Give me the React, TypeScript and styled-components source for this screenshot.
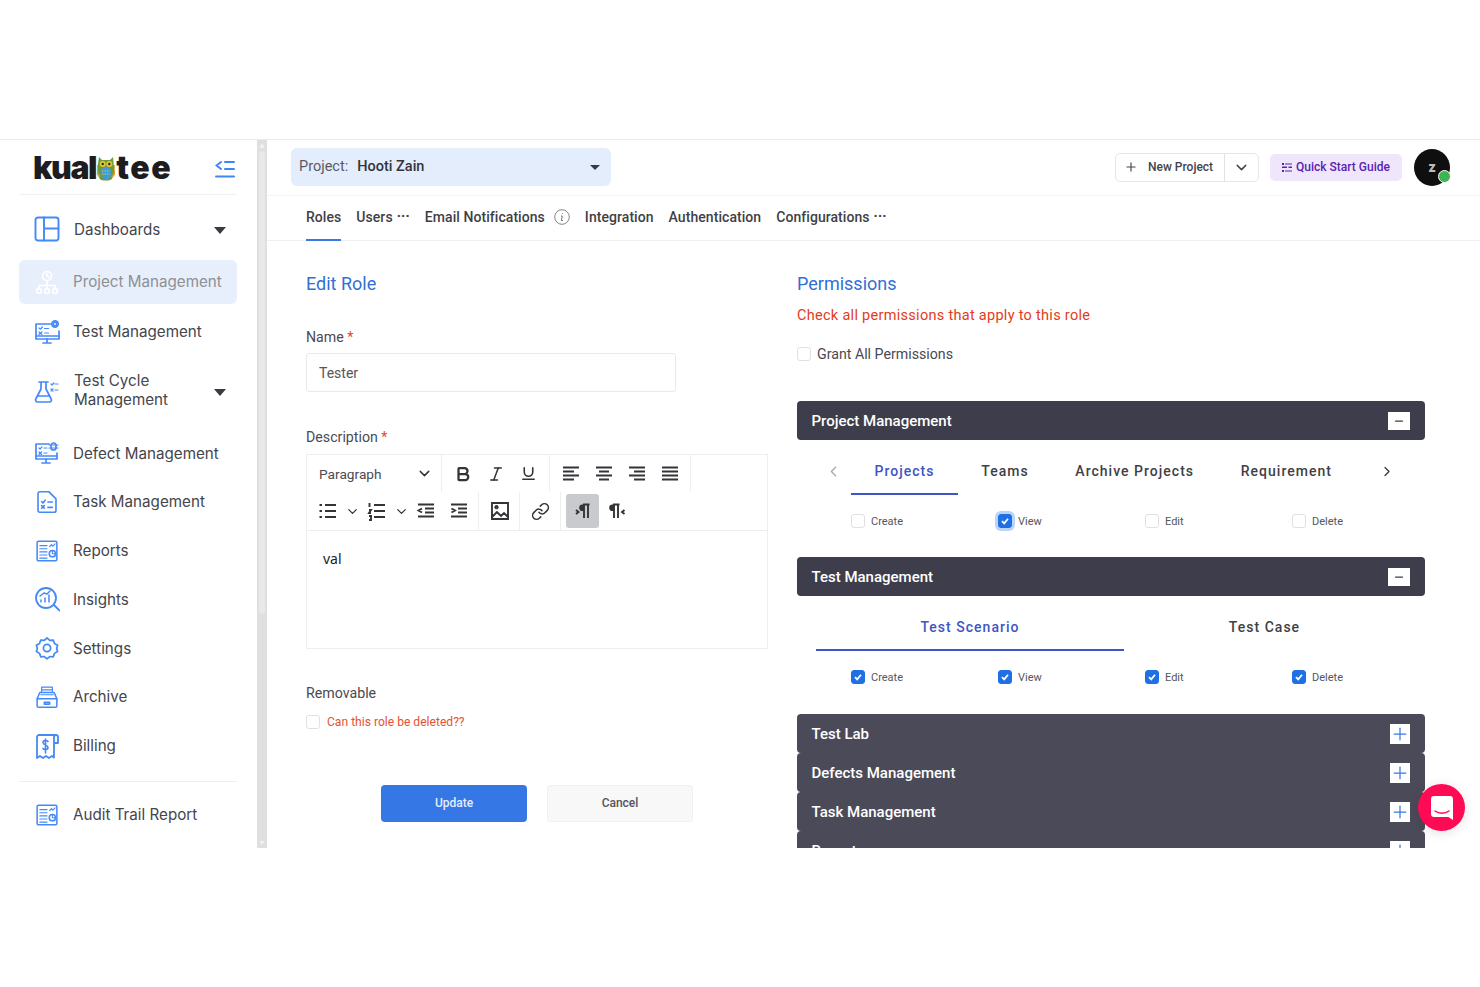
import React from "react";
import styled, { createGlobalStyle } from "styled-components";
import { Bold, Italic, Underline, ChevronDown, ChevronLeft, ChevronRight, Plus, Link, Minus } from "lucide-react";

const Global = createGlobalStyle`
  html, body { margin: 0; padding: 0; background: #fff; }
  body { font-family: Roboto, "Liberation Sans", sans-serif; color: #3f3f46; }
  * { box-sizing: border-box; }
`;

const TopBand = styled.div`height: 140px; border-bottom: 1px solid #e9e9ec;`;
const Shell = styled.div`display: flex; height: 708px; overflow: hidden; position: relative;`;
const Sidebar = styled.aside`width: 257px; flex: none; padding: 0 20px 0 19px;`;
const LogoRow = styled.div`height: 55px; display: flex; align-items: center; justify-content: space-between; border-bottom: 1px solid #f1f1f3; padding: 2px 2px 0 15px;`;
const Logo = styled.div`display: flex; align-items: center; font-family: Inter, sans-serif; font-weight: 900; font-size: 32px; color: #1d1d1f; line-height: 1; margin-left: -1px;`;
const LogoPart = styled.span<{ $ls: number }>`letter-spacing: ${p => p.$ls}px;`;
const Nav = styled.nav`display: flex; flex-direction: column; padding-top: 12px;`;
const NavItem = styled.div<{ $active?: boolean; $h?: number; $mb?: number; $tx?: number }>`
  display: flex; align-items: center; flex: none; height: ${p => p.$h ?? 44}px; margin-bottom: ${p => p.$mb ?? 4.7}px;
  padding: 0 11px 0 15px; border-radius: 6px; gap: ${p => 13 + (p.$tx ?? 0)}px;
  background: ${p => (p.$active ? "#e7effc" : "transparent")};
  color: ${p => (p.$active ? "#8f9094" : "#45454d")};
  font-family: Inter, sans-serif; font-size: 15.2px; line-height: 19px;
`;
const NavLabel = styled.span<{ $lift?: boolean }>`flex: 1; ${p => p.$lift && "margin-top: -2px;"}`;
const Caret = styled.span`width: 0; height: 0; border-left: 6.5px solid transparent; border-right: 6.5px solid transparent; border-top: 7px solid #3a3a42; margin-top: 2px;`;
const NavDivider = styled.div`height: 1px; background: #f0f0f2; margin: 13px 0 11px;`;
const NavSvg = styled.svg`width: 26px; height: 26px; flex: none; fill: none; stroke: ${p => p.color || "#4589f6"}; stroke-width: 1.7; stroke-linecap: round; stroke-linejoin: round;`;

const ScrollTrack = styled.div`width: 10px; flex: none; background: #dfdfdf; padding: 3px 2px; display: flex; flex-direction: column; align-items: center;`;
const ScrollThumb = styled.div`width: 6px; height: 463px; background: #e9e9e9; border-radius: 3px; margin: 3px 0 auto;`;
const ScrollUp = styled.span`width: 0; height: 0; border-left: 3.5px solid transparent; border-right: 3.5px solid transparent; border-bottom: 5px solid #f0f0f0;`;
const ScrollDown = styled.span`width: 0; height: 0; border-left: 3.5px solid transparent; border-right: 3.5px solid transparent; border-top: 4px solid #f0f0f0;`;

const Main = styled.main`flex: 1; min-width: 0;`;
const Header = styled.header`height: 56px; border-bottom: 1px solid #f3f3f5; display: flex; align-items: center; padding: 0 30px 1px 24px; gap: 11px;`;
const ProjectSelect = styled.div`width: 320px; height: 38px; border-radius: 6px; background: #e4edfc; display: flex; align-items: center; padding: 0 11px 2px 8px; font-size: 14.5px; margin-right: auto;`;
const ProjectKey = styled.span`color: #5a5a62; margin-right: 9px;`;
const ProjectValue = styled.span`font-weight: 500; color: #33333b; flex: 1;`;
const SmallCaret = styled.span`width: 0; height: 0; border-left: 5px solid transparent; border-right: 5px solid transparent; border-top: 5.5px solid #3a3a42; margin-top: 2px;`;
const SplitButton = styled.div`width: 144px; height: 29px; border: 1px solid #e6e6e8; border-radius: 5px; display: flex; align-items: center; font-size: 12px; font-weight: 500; color: #45454d;`;
const SplitMain = styled.div`flex: 1; height: 100%; display: flex; align-items: center; gap: 10px; padding-left: 8px; border-right: 1px solid #e2e2e4;`;
const SplitArrow = styled.div`width: 33px; display: flex; justify-content: center;`;
const GuideButton = styled.div`width: 132px; height: 27px; border-radius: 5px; background: #efe6fb; color: #5a22b3; font-size: 12px; font-weight: 500; display: flex; align-items: center; justify-content: center; gap: 4px;`;
const Avatar = styled.div`width: 36px; height: 37px; border-radius: 50%; background: #0f0f10; color: #bbb; font-size: 14px; font-weight: 900; display: flex; align-items: center; justify-content: center; position: relative; margin-left: 1px;`;
const OnlineDot = styled.span`position: absolute; right: -1px; bottom: 3px; width: 13px; height: 13px; border-radius: 50%; background: #3cb552; border: 1px solid #fff;`;

const TabBar = styled.div`height: 45px; border-bottom: 1px solid #f0f0f2; display: flex; align-items: stretch; padding-left: 39px; gap: 15px; font-size: 14px; font-weight: 500; letter-spacing: 0.06px; color: #3f3f46;`;
const TopTab = styled.div<{ $active?: boolean }>`display: flex; align-items: center; gap: 4px; height: 45px; padding-bottom: 1px; border-bottom: 2px solid ${p => (p.$active ? "#3a78e6" : "transparent")};`;
const Dots = styled.span`font-size: 13px; letter-spacing: 0.2px; font-weight: 900; margin-top: -3px;`;

const Content = styled.div`display: grid; grid-template-columns: 462px 628px; column-gap: 29px; padding: 31px 0 0 39px;`;
const Column = styled.section`display: flex; flex-direction: column; align-items: flex-start;`;
const Title = styled.h2`margin: 0; font-size: 18px; font-weight: 400; line-height: 24px; color: #2f6fd6;`;
const Label = styled.label<{ $mt: number }>`display: block; margin-top: ${p => p.$mt}px; font-size: 14.2px; line-height: 20px; color: #4a4a52;`;
const Required = styled.span`color: #e8452c;`;
const TextInput = styled.div`margin-top: 6px; width: 370px; height: 39px; border: 1px solid #e9e9ec; border-radius: 3px; display: flex; align-items: center; padding: 0 12px; font-size: 14px; color: #55555c;`;
const Editor = styled.div`margin-top: 7px; width: 462px; height: 195px; border: 1px solid #eeeef0;`;
const ToolRow = styled.div<{ $h: number; $bottom?: boolean }>`display: flex; height: ${p => p.$h}px; ${p => p.$bottom && "border-bottom: 1px solid #eeeef0;"}`;
const ToolGroup = styled.div<{ $w?: number; $pr?: number }>`display: flex; align-items: center; padding: 0 ${p => p.$pr ?? 4}px 0 4px; border-right: 1px solid #eeeef0; ${p => p.$w && `width: ${p.$w}px;`}`;
const ToolGroupBare = styled.div`display: flex; align-items: center; padding: 0 4px 0 5px; gap: 2px;`;
const ParagraphPick = styled.div`flex: 1; display: flex; align-items: center; justify-content: space-between; padding: 0 4px 0 8px; font-size: 13.7px; color: #4a4a52;`;
const ToolBtn = styled.div<{ $active?: boolean }>`width: 33px; height: 34px; border-radius: 3px; display: flex; align-items: center; justify-content: center; color: #333338; background: ${p => (p.$active ? "#c8cace" : "transparent")};`;
const ToolChev = styled.div`width: 16px; display: flex; justify-content: center; color: #333338;`;
const ToolSvg = styled.svg`width: 20px; height: 20px; fill: none; stroke: #333338; stroke-width: 1.9; stroke-linecap: butt;`;
const EditorBody = styled.div`padding: 18px 16px; font-family: "Noto Sans", "Open Sans", sans-serif; font-size: 14px; line-height: 20px; color: #222;`;
const CheckRow = styled.div`margin-top: 11px; display: flex; align-items: center; gap: 7px; font-size: 12.1px; line-height: 16px; color: #e8502f;`;
const Box = styled.span<{ $on?: boolean; $focus?: boolean }>`
  width: 14px; height: 14px; flex: none; border-radius: 3px; display: inline-flex; align-items: center; justify-content: center;
  border: 1px solid ${p => (p.$on ? "#1f6fe5" : "#e1e1e4")}; background: ${p => (p.$on ? "#1f6fe5" : "#fff")}; color: #fff;
  ${p => p.$focus && "box-shadow: 0 0 0 3px #bcd4f8;"}
`;
const Actions = styled.div`margin: 55px 0 0 75px; display: flex; gap: 20px;`;
const ActionBtn = styled.div<{ $primary?: boolean }>`
  width: 146px; height: 37px; border-radius: 4px; display: flex; align-items: center; justify-content: center; padding-bottom: 2px; font-size: 12px; font-weight: 500;
  background: ${p => (p.$primary ? "#3577e5" : "#f8f8f8")}; color: ${p => (p.$primary ? "#e4edfc" : "#55555c")};
  ${p => !p.$primary && "border: 1px solid #f0f0f0;"}
`;
const Hint = styled.p`margin: 10px 0 0; font-size: 14.5px; line-height: 20px; letter-spacing: 0.29px; color: #e23c1c;`;
const GrantRow = styled.div`margin-top: 18px; display: flex; align-items: center; gap: 6px; font-size: 14.2px; line-height: 20px; color: #4a4a52;`;
const Panel = styled.div<{ $mt?: number; $open?: boolean }>`
  width: 628px; height: 39px; flex: none; margin-top: ${p => p.$mt ?? 0}px; border-radius: 4px; padding: 0 15px 0 14.5px; display: flex; align-items: center; justify-content: space-between;
  background: ${p => (p.$open ? "#3e3d4b" : "#4b4a58")}; color: #fff; font-size: 15px; font-weight: 500;
`;
const MinusBox = styled.span`width: 22px; height: 18px; background: #fff; color: #3e3d4b; display: flex; align-items: center; justify-content: center;`;
const PlusBox = styled.span`width: 20px; height: 20px; background: #fff; color: #3a78e6; display: flex; align-items: center; justify-content: center; margin-right: 0.5px;`;
const SubTabs = styled.div<{ $low?: boolean }>`margin-top: ${p => (p.$low ? 9 : 8)}px; display: flex; height: ${p => (p.$low ? 46 : 47)}px; align-items: stretch;`;
const ArrowCell = styled.div<{ $w: number; $dim?: boolean; $pl?: number }>`width: ${p => p.$w}px; display: flex; align-items: center; padding-left: ${p => p.$pl ?? 0}px; color: ${p => (p.$dim ? "#a5a5aa" : "#333338")};`;
const SubTab = styled.div<{ $active?: boolean; $w?: number }>`
  padding: 0 23.3px; ${p => p.$w && `width: ${p.$w}px;`} display: flex; align-items: center; justify-content: center; white-space: nowrap;
  font-size: 14px; font-weight: 500; letter-spacing: 1.02px;
  color: ${p => (p.$active ? "#3f55c4" : "#3f3f46")};
  border-bottom: 2px solid ${p => (p.$active ? "#3f55c4" : "transparent")};
`;
const PermRow = styled.div<{ $mb: number }>`margin-top: 18px; margin-bottom: ${p => p.$mb}px; padding-left: 54px; display: flex; height: 16px;`;
const Perm = styled.div`width: 147px; display: flex; align-items: center; gap: 6px; font-size: 11px; color: #55555c;`;
const ChatBubble = styled.div`position: absolute; left: 1418px; top: 644px; width: 47px; height: 47px; border-radius: 50%; background: #ff0a55; display: flex; align-items: center; justify-content: center; box-shadow: 0 2px 12px rgba(0,0,0,.12);`;

const CheckMark = () => (
  <svg width="10" height="10" viewBox="0 0 10 10" fill="none" stroke="#fff" strokeWidth="1.8"><path d="M2 5.2 4.2 7.4 8 2.8" /></svg>
);

const GearDots = ({ x, y, r }: { x: number; y: number; r: number }) => (
  <g><circle cx={x} cy={y} r={r} /><circle cx={x} cy={y} r={r + 1.4} strokeDasharray="1.2 1.2" /></g>
);

const nav: Record<string, React.ReactNode> = {
  dash: <><rect x="1.5" y="1.5" width="23" height="23" rx="2.5" strokeWidth="1.9" /><path d="M10 1.5v23M10 12.5h14.5" strokeWidth="1.9" /></>,
  project: <><circle cx="13" cy="7" r="4.5" /><path d="M13 4.5V7l1.8 1M13 11.5v5M5 20v-3.5h16V20M13 16.5V20" /><circle cx="5" cy="22" r="2.4" /><circle cx="13" cy="22" r="2.4" /><circle cx="21" cy="22" r="2.4" /></>,
  test: <><path d="M17 5H2v15h23v-8" /><path d="M2 17h23M13 20v3M9 24h8" /><path d="M5 9l1.200 1.200L8.500 8M10.500 9.500h4M5 13l3 2.500M8 13l-3 2.500M10.500 14h4" strokeWidth="1.200" /><GearDots x={21} y={5} r={1.800} /></>,
  flask: <><path d="M5 4h9M7 4v7L1.800 21a2 2 0 0 0 1.800 3h11.800a2 2 0 0 0 1.800-3L12 11V4M4.500 18h10" /><path d="M17 6l1 1 1.800-2M21 6h3M17 11l2 2M19 11l-2 2M21 12h3" strokeWidth="1.200" /></>,
  defect: <><path d="M15 4H2v15h21v-6" /><path d="M2 16h21M12 19v3M8 23h8" /><path d="M5 8l1 1 2-2M10 8h3M5 12l2.500 2.500M7.500 12L5 14.500M10 13h3" strokeWidth="1.200" /><rect x="17" y="3" width="5" height="7" rx="2.500" /><path d="M15 5h9M15 8h9" strokeWidth="1.200" /></>,
  task: <><path d="M5 1.500h10l8 8v13a2 2 0 0 1-2 2H5a2 2 0 0 1-2-2v-19a2 2 0 0 1 2-2z" strokeWidth="1.800" /><path d="M7 12.500l1.500 1.500L11 11M14 13h5M7 17l3 3M10 17l-3 3M14 19h5" strokeWidth="1.800" /></>,
  report: <><rect x="2" y="2" width="22" height="22" rx="1.500" /><path d="M5 7h8M5 10.500h8M5 14h8M5 17.500h8M5 21h8M16 8l2-2 1.500 1.500L22 5" strokeWidth="1.300" /><circle cx="19" cy="16" r="3.500" /><path d="M19 12.500V16h3.500" strokeWidth="1.200" /></>,
  insight: <><circle cx="12" cy="12" r="10" strokeWidth="1.800" /><path d="M20 19l5.500 5.500" strokeWidth="1.800" /><path d="M7 16v-2M11 16v-4M15 16V9M6 10l4-3 3 1 3-3" strokeWidth="1.500" /></>,
  gear: <><path d="M13 1.800l3 2.700 4-.3 1.300 3.800 3.500 2-1 3.500 1 3.500-3.500 2-1.300 3.800-4-.3-3 2.700-3-2.700-4 .3-1.300-3.800-3.500-2 1-3.500-1-3.500 3.500-2L6 4.200l4 .3z" strokeWidth="1.900" /><circle cx="13" cy="13" r="4" strokeWidth="1.900" /></>,
  archive: <><path d="M2 15v8a1.500 1.500 0 0 0 1.500 1.500h19A1.500 1.500 0 0 0 24 23v-8l-3-7H5z" /><path d="M2 15h22M10 19h6v2h-6z" /><path d="M7 8V2h12v6M7 5h12M6 10.500h14" strokeWidth="1.300" /></>,
  bill: <><path d="M21 2H5a2 2 0 0 0-2 2v21l3-2 3 2 3-2 3 2 3-2 2 1.500V4a2 2 0 0 1 2-2h0a2 2 0 0 1 2 2v6h-4" strokeWidth="1.800" /><path d="M14 8.500c-1-1.500-5-1.500-5 1 0 3 5 2 5 5 0 2.500-4 2.500-5 1M11.500 6v14" strokeWidth="1.600" /></>,
};

const NavIcon = ({ n, color, tight }: { n: string; color?: string; tight?: boolean }) => (
  <NavSvg viewBox={tight ? "-1.500 -1.500 29 29" : "0 0 26 26"} color={color}>{nav[n]}</NavSvg>
);

const lines = (rows: [number, number][]) => rows.map(([a, b], i) => `M${a} ${3.5 + i * 4}H${b}`).join("");
const Tool = ({ d, head }: { d: string; head?: string }) => (
  <ToolSvg viewBox="0 0 20 20"><path d={d} />{head && <path d={head} fill="#333338" stroke="none" />}</ToolSvg>
);

const Owl = () => (
  <svg width="18" height="27" viewBox="0 0 18 27" style={{ margin: "0 1px 0 1px" }}>
    <path d="M2 2l3 3h8l3-3 .8 8c1 6 0 11-2 14-2 2-10 2-12 0-2-3-3-8-2-14z" fill="#6f9a3a" />
    <ellipse cx="9" cy="18" rx="5.500" ry="6.500" fill="#3f9bd0" />
    <circle cx="5.700" cy="9" r="3" fill="#e9c631" /><circle cx="12.300" cy="9" r="3" fill="#e9c631" />
    <circle cx="5.700" cy="9" r="1.200" fill="#222" /><circle cx="12.300" cy="9" r="1.200" fill="#222" />
    <path d="M5 16h8M5 19h8" stroke="#e9c631" strokeWidth="1.200" strokeDasharray="1.500 1" />
    <path d="M0 10c-1 5 0 9 3 12M18 10c1 5 0 9-3 12" stroke="#d99b2b" strokeWidth="2" fill="none" />
  </svg>
);

const perm = (on: [boolean, boolean, boolean, boolean], mb: number, focus?: boolean) => (
  <PermRow $mb={mb}>
    {["Create", "View", "Edit", "Delete"].map((t, i) => (
      <Perm key={t}>
        <Box $on={on[i]} $focus={focus && on[i]}>{on[i] && <CheckMark />}</Box>
        {t}
      </Perm>
    ))}
  </PermRow>
);

export default function App() {
  return (
    <>
      <Global />
      <TopBand />
      <Shell>
        <Sidebar>
          <LogoRow>
            <Logo><LogoPart $ls={-1.400}>kual</LogoPart><Owl /><LogoPart $ls={1.600}>tee</LogoPart></Logo>
            <svg width="20" height="19" viewBox="0 0 20 19" fill="none" stroke="#3f86f5" strokeWidth="2" strokeLinecap="round">
              <path d="M6 3 1.500 6.500 6 10M10 3h9M10 10h9M1 17.500h18" />
            </svg>
          </LogoRow>
          <Nav>
            <NavItem $tx={1} $mb={9}><NavIcon n="dash" /><NavLabel>Dashboards</NavLabel><Caret /></NavItem>
            <NavItem $active $mb={5.700}><NavIcon n="project" color="#fff" /><NavLabel $lift>Project Management</NavLabel></NavItem>
            <NavItem><NavIcon n="test" /><NavLabel>Test Management</NavLabel></NavItem>
            <NavItem $h={66} $mb={7} $tx={1}><NavIcon n="flask" /><NavLabel $lift>Test Cycle Management</NavLabel><Caret /></NavItem>
            <NavItem><NavIcon n="defect" /><NavLabel>Defect Management</NavLabel></NavItem>
            <NavItem><NavIcon n="task" tight /><NavLabel $lift>Task Management</NavLabel></NavItem>
            <NavItem><NavIcon n="report" tight /><NavLabel>Reports</NavLabel></NavItem>
            <NavItem><NavIcon n="insight" /><NavLabel>Insights</NavLabel></NavItem>
            <NavItem><NavIcon n="gear" tight /><NavLabel>Settings</NavLabel></NavItem>
            <NavItem><NavIcon n="archive" tight /><NavLabel>Archive</NavLabel></NavItem>
            <NavItem $mb={0}><NavIcon n="bill" /><NavLabel>Billing</NavLabel></NavItem>
            <NavDivider />
            <NavItem><NavIcon n="report" tight /><NavLabel>Audit Trail Report</NavLabel></NavItem>
          </Nav>
        </Sidebar>
        <ScrollTrack><ScrollUp /><ScrollThumb /><ScrollDown /></ScrollTrack>
        <Main>
          <Header>
            <ProjectSelect>
              <ProjectKey>Project:</ProjectKey>
              <ProjectValue>Hooti Zain</ProjectValue>
              <SmallCaret />
            </ProjectSelect>
            <SplitButton>
              <SplitMain><Plus size={14} strokeWidth={2} />New Project</SplitMain>
              <SplitArrow><ChevronDown size={17} strokeWidth={2} /></SplitArrow>
            </SplitButton>
            <GuideButton>
              <svg width="10" height="9" viewBox="0 0 10 9" fill="#5a22b3"><path d="M0 0h2v2H0zM3 .4h7v1.200H3zM0 3.500h5V5H0zM6.500 3.500H10V5H6.500zM0 7h2v2H0zM3 7.400h7v1.200H3z" /></svg>
              Quick Start Guide
            </GuideButton>
            <Avatar>z<OnlineDot /></Avatar>
          </Header>
          <TabBar>
            <TopTab $active>Roles</TopTab>
            <TopTab>Users <Dots>···</Dots></TopTab>
            <TopTab>
              Email Notifications
              <svg width="16" height="16" viewBox="0 0 16 16" fill="none" stroke="#777" style={{ marginLeft: 5 }}>
                <circle cx="8" cy="8" r="7.300" strokeWidth="0.900" /><path d="M8.300 4.200v.8M7 7h1.300L7.400 11.500H9" strokeWidth="1" />
              </svg>
            </TopTab>
            <TopTab>Integration</TopTab>
            <TopTab>Authentication</TopTab>
            <TopTab>Configurations <Dots>···</Dots></TopTab>
          </TabBar>
          <Content>
            <Column>
              <Title>Edit Role</Title>
              <Label $mt={31}>Name <Required>*</Required></Label>
              <TextInput>Tester</TextInput>
              <Label $mt={35}>Description <Required>*</Required></Label>
              <Editor>
                <ToolRow $h={37}>
                  <ToolGroup $w={135}><ParagraphPick>Paragraph<ChevronDown size={17} strokeWidth={2} color="#333338" /></ParagraphPick></ToolGroup>
                  <ToolGroup>
                    <ToolBtn><Bold size={18} strokeWidth={3} /></ToolBtn>
                    <ToolBtn><Italic size={18} strokeWidth={2} /></ToolBtn>
                    <ToolBtn><Underline size={17} strokeWidth={2.200} /></ToolBtn>
                  </ToolGroup>
                  <ToolGroup>
                    <ToolBtn><Tool d={lines([[2, 18], [2, 13], [2, 18], [2, 13]])} /></ToolBtn>
                    <ToolBtn><Tool d={lines([[2, 18], [5, 15], [2, 18], [5, 15]])} /></ToolBtn>
                    <ToolBtn><Tool d={lines([[2, 18], [7, 18], [2, 18], [7, 18]])} /></ToolBtn>
                    <ToolBtn><Tool d={lines([[2, 18], [2, 18], [2, 18], [2, 18]])} /></ToolBtn>
                  </ToolGroup>
                </ToolRow>
                <ToolRow $h={39} $bottom>
                  <ToolGroup $pr={3}>
                    <ToolBtn><Tool d="M1.500 4h2.500M1.500 10h2.500M1.500 16h2.500M7 4h11M7 10h11M7 16h11" /></ToolBtn>
                    <ToolChev><ChevronDown size={15} strokeWidth={2} /></ToolChev>
                    <ToolBtn><Tool d="M2.500 2v4M2 9h2l-2 3h2M2 15h2v4H2M7 4h11M7 10h11M7 16h11" /></ToolBtn>
                    <ToolChev><ChevronDown size={15} strokeWidth={2} /></ToolChev>
                    <ToolBtn><Tool d={lines([[2, 18], [9, 18], [9, 18], [2, 18]]) + "M6 7.500 2.500 9.500 6 11.500"} /></ToolBtn>
                    <ToolBtn><Tool d={lines([[2, 18], [9, 18], [9, 18], [2, 18]]) + "M2.500 7.500 6 9.500 2.500 11.500"} /></ToolBtn>
                  </ToolGroup>
                  <ToolGroup $pr={3}>
                    <ToolBtn><Tool d="M2 2h16v16H2zM2 16l5-5 4 4 3-3 4 4M6.500 5a1.200 1.200 0 1 0 .01 0" /></ToolBtn>
                  </ToolGroup>
                  <ToolGroup $pr={3}>
                    <ToolBtn><Link size={19} strokeWidth={1.900} /></ToolBtn>
                  </ToolGroup>
                  <ToolGroupBare>
                    <ToolBtn $active><Tool d="M11 3.500v13.500M15 3.500v13.500M16.500 3.500H10M3 9 5.500 11 3 13" head="M11 3.500H9.500a3.300 3.300 0 0 0 0 6.600H11z" /></ToolBtn>
                    <ToolBtn><Tool d="M6 3.500v13.500M10 3.500v13.500M11.500 3.500H5M16.500 9 14 11 16.500 13" head="M6 3.500H4.500a3.300 3.300 0 0 0 0 6.600H6z" /></ToolBtn>
                  </ToolGroupBare>
                </ToolRow>
                <EditorBody>val</EditorBody>
              </Editor>
              <Label $mt={34}>Removable</Label>
              <CheckRow><Box />Can this role be deleted??</CheckRow>
              <Actions>
                <ActionBtn $primary>Update</ActionBtn>
                <ActionBtn>Cancel</ActionBtn>
              </Actions>
            </Column>
            <Column>
              <Title>Permissions</Title>
              <Hint>Check all permissions that apply to this role</Hint>
              <GrantRow><Box />Grant All Permissions</GrantRow>
              <Panel $mt={37} $open>Project Management<MinusBox><Minus size={12} strokeWidth={2.500} /></MinusBox></Panel>
              <SubTabs>
                <ArrowCell $w={54} $dim $pl={28}><ChevronLeft size={17} strokeWidth={1.800} /></ArrowCell>
                <SubTab $active $w={107}>Projects</SubTab>
                <SubTab>Teams</SubTab>
                <SubTab>Archive Projects</SubTab>
                <SubTab>Requirement</SubTab>
                <ArrowCell $w={40} $pl={24}><ChevronRight size={17} strokeWidth={1.800} /></ArrowCell>
              </SubTabs>
              {perm([false, true, false, false], 28, true)}
              <Panel $open>Test Management<MinusBox><Minus size={12} strokeWidth={2.500} /></MinusBox></Panel>
              <SubTabs $low>
                <ArrowCell $w={19} />
                <SubTab $active $w={308}>Test Scenario</SubTab>
                <SubTab $w={281}>Test Case</SubTab>
              </SubTabs>
              {perm([true, true, true, true], 29)}
              {["Test Lab", "Defects Management", "Task Management", "Reports"].map(t => (
                <Panel key={t}>{t}<PlusBox><Plus size={20} strokeWidth={1.500} /></PlusBox></Panel>
              ))}
            </Column>
          </Content>
        </Main>
        <ChatBubble>
          <svg width="22" height="24" viewBox="0 0 22 24">
            <path d="M3 0h16a3 3 0 0 1 3 3v21l-4.500-3H3a3 3 0 0 1-3-3V3a3 3 0 0 1 3-3z" fill="#fff" />
            <path d="M4 15c4 3 10 3 14 0" stroke="#ff0a55" strokeWidth="1.500" fill="none" strokeLinecap="round" />
          </svg>
        </ChatBubble>
      </Shell>
    </>
  );
}
